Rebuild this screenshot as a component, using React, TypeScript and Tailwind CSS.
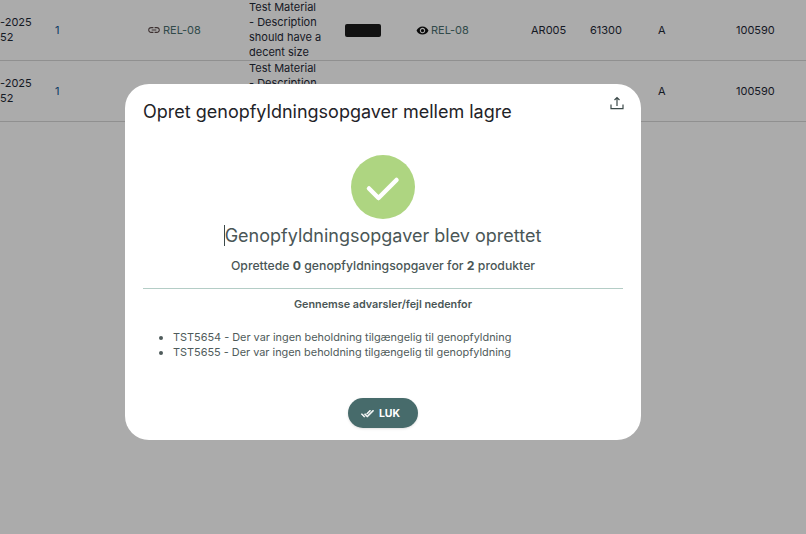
import { MdLink, MdVisibility } from "react-icons/md";

const rows = [0, 1];

const App = () => {
  return (
    <div className="relative h-[534px] w-full overflow-hidden bg-white font-['Inter',sans-serif] text-[11px] leading-[15px] text-[#1f2937]">
      {/* Table */}
      {rows.map((row) => (
        <div key={row} className="flex h-[61px] items-center border-b border-[#d7d7d7] text-[11px]">
          <div className="w-[55px] shrink-0">
            -2025
            <br />
            52
          </div>
          <div className="w-[92px] shrink-0 text-[#0f5a96]">1</div>
          <div className="flex w-[102px] shrink-0 items-center gap-[2px] text-[#4a6f6f]">
            <MdLink className="text-[14px] text-[#5c4a4a]" />
            REL-08
          </div>
          <div className="-mt-px h-[60px] w-[96px] shrink-0 overflow-hidden">
            Test Material
            <br />
            - Description
            <br />
            should have a
            <br />
            decent size
          </div>
          <div className="w-[71px] shrink-0">
            <div className="h-[13px] w-[36px] rounded-[2px] bg-[#1c1c1c] blur-[0.5px]"></div>
          </div>
          <div className="flex w-[115px] shrink-0 items-center gap-[2px] text-[#4a6f6f]">
            <MdVisibility className="text-[13px] text-[#111]" />
            REL-08
          </div>
          <div className="w-[59px] shrink-0">AR005</div>
          <div className="w-[68px] shrink-0">61300</div>
          <div className="w-[78px] shrink-0">A</div>
          <div className="w-[70px] shrink-0">100590</div>
        </div>
      ))}

      {/* Dialog */}
      <div className="absolute inset-0 bg-black/[0.33] pl-[125px] pt-[84px]">
        <div className="h-[356px] w-[516px] rounded-[24px] bg-white px-[18px]">
          <div className="flex items-start justify-between pt-[16px]">
            <h2 className="text-[18px] leading-[24px] text-[#1f2328]">Opret genopfyldningsopgaver mellem lagre</h2>
            <svg width="14" height="14" viewBox="0 0 14 14" fill="none" stroke="#3c4a4a" strokeWidth="1.2" className="-mr-px -mt-[4px]">
              <path d="M7 1.5V10M4.5 4 7 1.5 9.5 4M1 8.5V12.6H13V8.5" />
            </svg>
          </div>

          <div className="mt-[31px] flex justify-center">
            <div className="flex h-[64px] w-[64px] items-center justify-center rounded-full bg-[#aed581]">
              <svg width="64" height="64" viewBox="0 0 64 64" fill="none">
                <path d="M18 33.5 27.5 43 45.5 25" stroke="#fff" strokeWidth="4.5" strokeLinecap="round" strokeLinejoin="round" />
              </svg>
            </div>
          </div>

          <div className="mt-[5px] text-center text-[18px] leading-[24px] text-[#4a5656]">
            <span className="relative">
              <span className="absolute -left-[1px] top-0 h-[21px] w-px bg-[#3c4a4a]"></span>
              Genopfyldningsopgaver blev oprettet
            </span>
          </div>
          <p className="mt-[8px] text-center text-[12.25px] leading-[20px] font-medium text-[#4a5656]">
            Oprettede <b>0</b> genopfyldningsopgaver for <b>2</b> produkter
          </p>
          <div className="mt-[12px] border-t border-[#b4cdc6]"></div>
          <p className="mt-[8px] text-center text-[10.8px] leading-[16px] font-semibold text-[#4a5656]">
            Gennemse advarsler/fejl nedenfor
          </p>

          <ul className="mt-[17px] list-disc pl-[30px] text-[10.9px] leading-[15px] text-[#4f5b5b]">
            <li>TST5654 - Der var ingen beholdning tilgængelig til genopfyldning</li>
            <li>TST5655 - Der var ingen beholdning tilgængelig til genopfyldning</li>
          </ul>

          <div className="mt-[38px] flex justify-center">
            <button className="flex h-[30px] w-[70px] items-center justify-center gap-[5px] rounded-full bg-[#476b6b] pr-[5px] text-[10.5px] font-bold text-white shadow-sm">
              <svg width="13" height="13" viewBox="0 0 24 24" fill="#fff" stroke="#fff" strokeWidth="1">
                <path d="M18 7l-1.41-1.41-6.34 6.34 1.41 1.41L18 7zm4.24-1.41L11.66 16.17 7.48 12l-1.41 1.41L11.66 19l12-12-1.42-1.41zM.41 13.41L6 19l1.41-1.41L1.83 12 .41 13.41z" />
              </svg>
              LUK
            </button>
          </div>
        </div>
      </div>
    </div>
  );
};

export default App;
